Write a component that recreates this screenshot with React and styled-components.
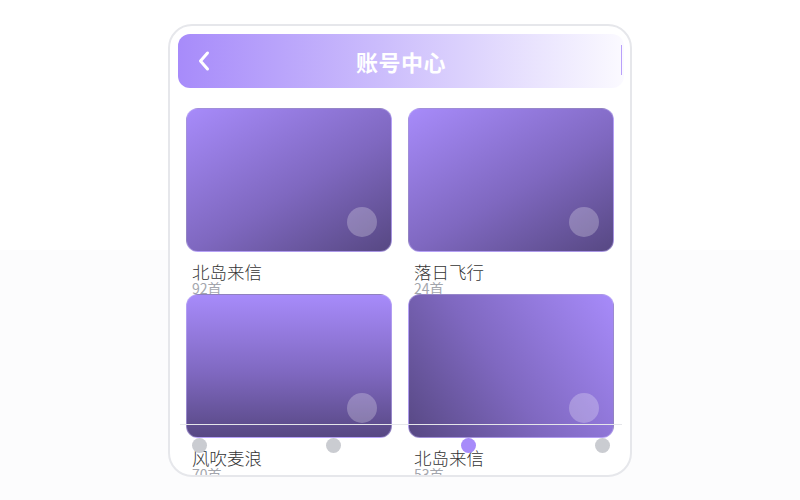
import styled, { createGlobalStyle } from 'styled-components';

const GlobalStyle = createGlobalStyle`
  html, body {
    margin: 0;
    height: 100%;
  }
  body {
    background: linear-gradient(to bottom, #ffffff 50%, #fcfcfd 50%);
    font-family: 'Noto Sans CJK SC', 'Noto Sans', sans-serif;
  }
`;

const Page = styled.div`
  width: 800px;
  height: 500px;
  display: flex;
  justify-content: center;
  padding-top: 24px;
  box-sizing: border-box;
`;

const Phone = styled.div`
  position: relative;
  width: 464px;
  height: 453px;
  box-sizing: border-box;
  border: 2px solid #e6e7eb;
  border-radius: 24px;
  background: #fff;
  overflow: hidden;
  padding: 8px 6px 0 8px;
`;

const Header = styled.div`
  position: relative;
  height: 54px;
  border-radius: 12px;
  background: linear-gradient(to right, #a78bfa 0%, #cbbcfc 45%, #fbfaff 100%);
  display: flex;
  align-items: center;
  justify-content: center;

  &::after {
    content: '';
    position: absolute;
    right: 2px;
    top: 11px;
    width: 1px;
    height: 30px;
    background: #b9a0fa;
  }
`;

const BackButton = styled.div`
  position: absolute;
  left: 16px;
  top: 16px;
  width: 20px;
  height: 22px;
  display: flex;
  align-items: center;
  justify-content: center;
`;

const Title = styled.h1`
  margin: 0;
  color: #fff;
  font-size: 22px;
  font-weight: 700;
  letter-spacing: 0.5px;
`;

const Grid = styled.div`
  display: grid;
  grid-template-columns: repeat(2, 206px);
  column-gap: 16px;
  padding: 20px 0 0 8px;
`;

const Item = styled.div`
  display: flex;
  flex-direction: column;
`;

const Cover = styled.div`
  position: relative;
  height: 144px;
  border-radius: 12px;
  box-sizing: border-box;
  border: 1px solid rgba(200, 185, 250, 0.5);
  background: linear-gradient(${(p) => p.$angle}, #a78bfa 0%, #7f68c0 55%, #574883 100%);
`;

const Disc = styled.div`
  position: absolute;
  right: 14px;
  bottom: 14px;
  width: 30px;
  height: 30px;
  border-radius: 50%;
  background: rgba(255, 255, 255, 0.25);
`;

const Name = styled.div`
  margin: 9px 0 0 6px;
  font-size: 17.5px;
  font-weight: 300;
  line-height: 21px;
  color: #333;
`;

const Count = styled.div`
  margin-left: 6px;
  font-size: 14px;
  line-height: 12px;
  color: #a3a6ad;
`;

const TabBar = styled.div`
  position: absolute;
  left: 10px;
  top: 398px;
  width: 442px;
  box-sizing: border-box;
  border-top: 1px solid #e5e6ea;
  padding: 13px 12px 0;
  display: flex;
  justify-content: space-between;
  z-index: 2;
`;

const Dot = styled.div`
  width: 15px;
  height: 15px;
  border-radius: 50%;
  background: ${(p) => (p.$active ? '#a78bfa' : '#caccd1')};
`;

const albums = [
  { name: '北岛来信', count: 92, angle: '150deg' },
  { name: '落日飞行', count: 24, angle: '150deg' },
  { name: '风吹麦浪', count: 70, angle: '180deg' },
  { name: '北岛来信', count: 53, angle: '235deg' },
];

const App = () => (
  <Page>
    <GlobalStyle />
    <Phone>
      <Header>
        <BackButton>
          <svg width="14" height="22" viewBox="0 0 14 22" fill="none">
            <path d="M10.5 3 L3.5 11 L10.5 19" stroke="#fff" strokeWidth="3" strokeLinecap="round" strokeLinejoin="round" />
          </svg>
        </BackButton>
        <Title>账号中心</Title>
      </Header>
      <Grid>
        {albums.map((a, i) => (
          <Item key={i}>
            <Cover $angle={a.angle}>
              <Disc />
            </Cover>
            <Name>{a.name}</Name>
            <Count>{a.count}首</Count>
          </Item>
        ))}
      </Grid>
      <TabBar>
        <Dot />
        <Dot />
        <Dot $active />
        <Dot />
      </TabBar>
    </Phone>
  </Page>
);

export default App;
